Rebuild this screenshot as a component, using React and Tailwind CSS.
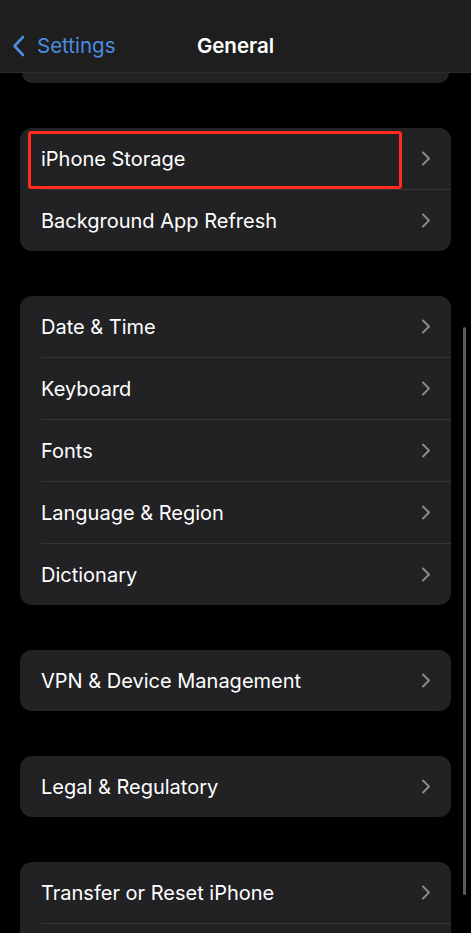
import React from "react";

const Chevron = () => (
  <svg width="10" height="15" viewBox="0 0 10 15" fill="none" className="shrink-0">
    <path d="M2 1.5 L8 7.5 L2 13.5" stroke="#8a8a8e" strokeWidth="2" strokeLinecap="round" strokeLinejoin="round" />
  </svg>
);

const Row = ({ label, last }) => (
  <div className="flex h-[61px] items-center pl-[21px] pr-[20px] relative">
    <span className="flex-1 text-[20px] text-white">{label}</span>
    {label && <Chevron />}
    {!last && <div className="absolute bottom-[-1px] left-[21px] right-0 h-px bg-[#353537]" />}
  </div>
);

const Group = ({ items, children }) => (
  <div className="relative mx-[20px] rounded-[12px] bg-[#222224] flex flex-col gap-px">
    {items.map((label, i) => (
      <Row key={i} label={label} last={i === items.length - 1} />
    ))}
    {children}
  </div>
);

export default function App() {
  return (
    <div
      className="relative h-[933px] overflow-hidden bg-black"
      style={{ fontFamily: "Inter, 'Noto Sans', sans-serif" }}
    >
      {/* Nav bar */}
      <div className="relative flex h-[73px] items-start pt-[32px] border-b border-[#2c2c2e] bg-[#1e1e1e]">
        <div className="flex h-[28px] items-center gap-[12px] pl-[12px]">
          <svg width="13" height="22" viewBox="0 0 13 22" fill="none">
            <path d="M11 2 L2.5 11 L11 20" stroke="#4a8de0" strokeWidth="2.6" strokeLinecap="round" strokeLinejoin="round" />
          </svg>
          <span className="text-[20.5px] text-[#4a8de0]">Settings</span>
        </div>
        <span className="absolute left-1/2 top-[32px] flex h-[28px] -translate-x-1/2 items-center text-[20.5px] font-semibold text-white">
          General
        </span>
      </div>

      {/* previous card peeking under the bar */}
      <div className="mx-[22px] h-[10px] rounded-b-[12px] bg-[#222224]" />

      <div className="mt-[45px] flex flex-col gap-[45px]">
        <Group items={["iPhone Storage", "Background App Refresh"]}>
          <div className="absolute left-[8px] top-[3px] h-[58px] w-[374px] rounded-[3px] border-[3px] border-[#ff2b1c]" />
        </Group>
        <Group items={["Date & Time", "Keyboard", "Fonts", "Language & Region", "Dictionary"]} />
        <Group items={["VPN & Device Management"]} />
        <Group items={["Legal & Regulatory"]} />
        <Group items={["Transfer or Reset iPhone", ""]} />
      </div>

      {/* scroll indicator */}
      <div className="absolute left-[463px] top-[327px] h-[568px] w-[3px] rounded-full bg-[#5a5a5c]" />
    </div>
  );
}
